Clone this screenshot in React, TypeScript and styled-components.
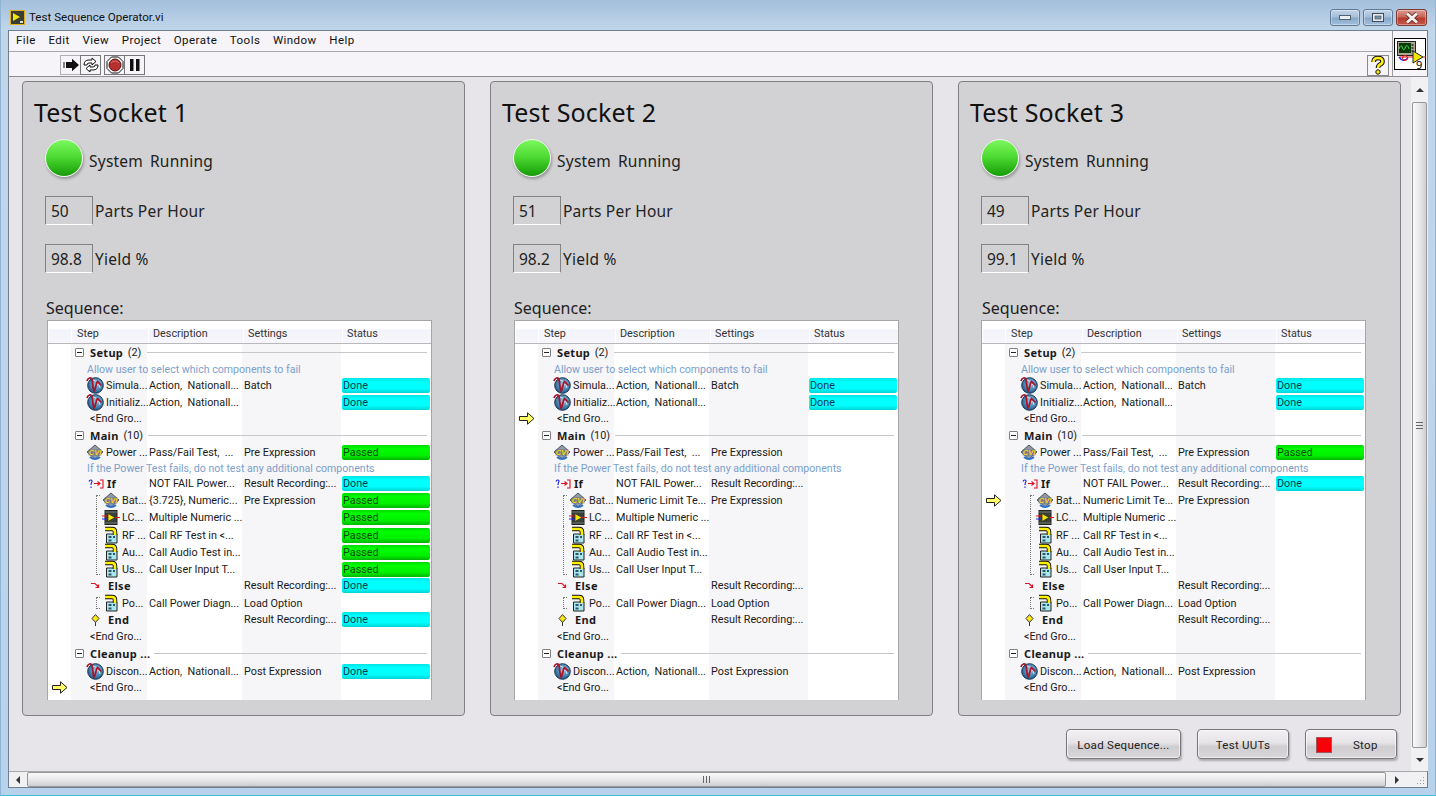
import React from "react";
import styled, { createGlobalStyle } from "styled-components";

const Global = createGlobalStyle`
  html, body { margin: 0; padding: 0; width: 1436px; height: 796px; overflow: hidden; }
  * { box-sizing: border-box; }
  body { font-family: "Noto Sans", "Open Sans", sans-serif; }
`;

const Win = styled.div`
  width: 1436px; height: 796px; display: flex; flex-direction: column;
  background: linear-gradient(180deg, #a3bfdc 0, #c2d6ea 30px, #b9d2ec 100%);
  border-bottom: 1px solid #3dbde0; border-left: 1px solid #8fb4d4; border-right: 1px solid #8fb4d4;
`;
const TitleBar = styled.div`
  height: 30px; flex: none; display: flex; align-items: center; padding: 0 8px 0 9px;
`;
const TitleLogo = styled.svg`margin-top: 4px; flex: none;`;
const TitleText = styled.span`
  font-family: Roboto, sans-serif; font-size: 11.6px; color: #111; margin-left: 4px; flex: 1; margin-top: 4px;
`;
const WinBtns = styled.div`display: flex; gap: 3px; margin-top: 5px; padding-bottom: 0;`;
const WinBtn = styled.div<{ $close?: boolean }>`
  width: ${p => (p.$close ? 31 : 30)}px; height: 17px; border: 1px solid ${p => (p.$close ? "#7d3a33" : "#5f7a96")};
  border-radius: 3px; display: flex; align-items: center; justify-content: center;
  background: ${p => (p.$close
    ? "linear-gradient(180deg,#dc9a90 0,#c9665a 45%,#b43b2e 55%,#c8584c 100%)"
    : "linear-gradient(180deg,#c3d5e8 0,#a4bfda 45%,#88a8c8 55%,#a2c0de 100%)")};
  box-shadow: inset 0 0 0 1px rgba(255,255,255,.35);
`;
const Client = styled.div`
  margin: 0 7px 0 7px; height: 758px; flex: none; display: flex; flex-direction: column;
  border: 1px solid #6f7f8f; background: #e7e5e9;
`;
const Bars = styled.div`display: flex; height: 46px; flex: none; border-bottom: 1px solid #8e8e90; background: #f6f4f8;`;
const BarsLeft = styled.div`flex: 1; display: flex; flex-direction: column;`;
const MenuBar = styled.div`
  height: 21px; display: flex; align-items: center; padding: 0 0 3px 7px; gap: 12.6px; flex: none;
  border-bottom: 1px solid #a8a8aa; font-family: Roboto, sans-serif; font-size: 11.5px; color: #111; letter-spacing: .04em;
`;
const ToolBar = styled.div`display: flex; align-items: center; padding: 2px 3px 0 51px; flex: 1;`;
const ToolGroup = styled.div`display: flex; margin-right: 4px;`;
const ToolBtn = styled.div<{ $strong?: boolean }>`
  width: 21px; height: 20px; display: flex; align-items: center; justify-content: center;
  border: 1px solid ${p => (p.$strong ? "#77777a" : "#b0b0b2")}; margin-right: -1px; background: #f6f4f8;
`;
const Spacer = styled.div`flex: 1;`;
const HelpBtn = styled.div`
  width: 22px; height: 21px; border: 1px solid #8a8a8a; display: flex; align-items: center; justify-content: center;
`;
const IconCell = styled.div`
  width: 35px; flex: none; border-left: 1px solid #9c9c9e; display: flex; align-items: center; justify-content: center; padding-top: 1px;
`;
const Middle = styled.div`flex: 1; display: flex; min-height: 0;`;
const Pane = styled.div`flex: 1; display: flex; flex-direction: column; padding: 4px 10px 0 13px;`;
const Panels = styled.div`display: flex; gap: 25px; flex: none;`;
const Panel = styled.section`
  width: 443px; height: 635px; flex: none; border: 1px solid #808082; border-radius: 4px;
  display: flex; flex-direction: column;
  background: repeating-conic-gradient(#d0cfd1 0 25%, #d4d3d5 0 50%) 0 0 / 2px 2px;
`;
const PanelTitle = styled.h2`
  margin: 13px 0 0 11px; font-size: 25px; font-weight: 400; line-height: 34px; color: #111; height: 34px; letter-spacing: .007em;
`;
const LedRow = styled.div`display: flex; align-items: center; margin: 10px 0 0 22px; height: 38px;`;
const Led = styled.div`
  width: 38px; height: 38px; border-radius: 50%; border: 1.5px solid #f4f4f4;
  background: linear-gradient(180deg, #7df85f 0, #4fdc33 45%, #169b08 100%);
  box-shadow: 1px 2px 3px rgba(0,0,0,.3);
`;
const LedLabel = styled.span`font-size: 15.5px; color: #222; word-spacing: .17em; letter-spacing: .015em; margin: 6px 0 0 6px;`;
const NumRow = styled.div`display: flex; align-items: center; margin: 19px 0 0 22px; height: 29px;`;
const NumBox = styled.div`
  width: 48px; height: 29px; padding-left: 5px; display: flex; align-items: center;
  border: 1px solid #828284; border-bottom-color: #fff; font-size: 15.5px; color: #222;
`;
const NumLabel = styled.span`font-size: 15.5px; color: #222; margin-left: 2px; letter-spacing: .014em;`;
const SeqLabel = styled.div<{ $inset: number }>`
  font-size: 16px; color: #222; margin: 24px 0 0 ${p => p.$inset}px; line-height: 22px; height: 23px;
`;
const TableBox = styled.div<{ $inset: number }>`
  width: 385px; height: 380px; margin-left: ${p => p.$inset}px; background: #fff; flex: none; display: flex; flex-direction: column;
  border: 1px solid #a6a6a8; border-bottom: none;
  font-family: Roboto, sans-serif; font-size: 10.8px; color: #1a1a1a; overflow: hidden;
`;
const cols = "23px 77px 95px 99px 89px";
const Header = styled.div`
  display: grid; grid-template-columns: ${cols}; height: 23px; flex: none; border-bottom: 1px solid #b9b9bb;
  background: linear-gradient(180deg,#fff 0,#fff 35%,#f3f3fb 40%,#f6f6fc 100%);
`;
const HeadCell = styled.div<{ $pad?: number }>`
  padding: 3px 0 0 ${p => p.$pad ?? 4}px; display: flex; align-items: center; border-left: 1px solid #fff; color: #333;
`;
const Body = styled.div`
  flex: 1; background: linear-gradient(90deg, #fff 0 23px, #f6f5f7 23px 99px, #fff 99px 194px, #f6f5f7 194px 293px, #fff 293px);
`;
const Row = styled.div<{ $h: number }>`
  display: grid; grid-template-columns: ${cols}; height: ${p => p.$h}px; align-items: center;
`;
const Gutter = styled.div`display: flex; align-items: center; justify-content: center; height: 100%;`;
const StepCell = styled.div<{ $indent: number; $tree?: string }>`
  position: relative; display: flex; align-items: center; gap: 2px; height: 100%; white-space: pre;
  padding-left: ${p => p.$indent}px;
  ${p => p.$tree ? `&::before { content: ""; position: absolute; left: 25px; width: 3px;
     top: ${p.$tree === "top" || p.$tree === "single" ? "3px" : "0"};
     bottom: ${p.$tree === "bottom" || p.$tree === "single" ? "3px" : "0"};
     border-left: 1px dotted #777;
     ${p.$tree === "top" || p.$tree === "single" ? "border-top: 1px dotted #777;" : ""}
     ${p.$tree === "bottom" || p.$tree === "single" ? "border-bottom: 1px dotted #777;" : ""} }` : ""}
`;
const BoldName = styled.b<{ $left?: number }>`
  font-family: "Noto Sans", sans-serif; font-weight: 700; margin-left: ${p => p.$left ?? 0}px; font-size: 11px; letter-spacing: .03em;
`;
const Cell = styled.div`padding-left: 1px; white-space: pre;`;
const Toggle = styled.span`
  width: 9px; height: 9px; border: 1px solid #808082; border-radius: 1px; margin: 0 3px 0 0; display: flex; align-items: center; justify-content: center; background: #fff; flex: none;
  &::after { content: ""; width: 5px; height: 1px; background: #222; }
`;
const LineFill = styled.span`flex: 1; height: 1px; background: #c8c8ca; margin-left: 4px;`;
const LineCell = styled.div<{ $left: number }>`
  grid-column: span 3; height: 1px; background: #c8c8ca; margin: 0 4px 0 ${p => p.$left}px;
`;
const Comment = styled.div`
  grid-column: 2 / -1; padding: 1px 0 0 16px; color: #7ba0cc; white-space: pre; font-size: 10.6px;
`;
const Pill = styled.div<{ $s: "Done" | "Passed" }>`
  height: 15px; margin-right: 1px; border-radius: 2px; padding-left: 1px; line-height: 15px;
  background: ${p => (p.$s === "Done"
    ? "linear-gradient(180deg,#00e4e4 0,#00ffff 25%,#00ffff 70%,#00d4d4 100%)"
    : "linear-gradient(180deg,#00d800 0,#00ff00 25%,#00f000 70%,#00b400 100%)")};
  color: ${p => (p.$s === "Done" ? "#0a3a4a" : "#0f4a0f")};
`;
const ButtonRow = styled.div`
  display: flex; justify-content: flex-end; gap: 16px; margin-top: 13px; padding-right: 4px;
`;
const PushBtn = styled.button<{ $w: number }>`
  width: ${p => p.$w}px; height: 30px; border: 1px solid #77777a; border-radius: 4px; padding: 1px 0 0;
  font-family: Roboto, sans-serif; font-size: 11.5px; color: #222; letter-spacing: .025em;
  display: flex; align-items: center; justify-content: center;
  background: linear-gradient(180deg,#f2f0f2 0,#e6e4e6 45%,#cfcdd0 60%,#d8d6d9 100%);
  box-shadow: 1px 2px 2px rgba(0,0,0,.25), inset 0 0 0 1px rgba(255,255,255,.6);
`;
const StopBtn = styled(PushBtn)`justify-content: flex-start; padding-left: 10px;`;
const RedSq = styled.span`width: 16px; height: 16px; background: #f8000a; border: 1px solid #a0565a; flex: none; margin-right: 21px;`;
const VScroll = styled.div`
  width: 17px; flex: none; display: flex; flex-direction: column; align-items: center; background: #f1f0f3;
`;
const ArrowSlot = styled.div<{ $h: number }>`height: ${p => p.$h}px; flex: none; display: flex; align-items: center; justify-content: center;`;
const ArrowSlotH = styled.div<{ $w: number }>`width: ${p => p.$w}px; flex: none; display: flex; align-items: center; justify-content: center;`;
const Tri = styled.span<{ $d: "u" | "d" | "l" | "r" }>`
  width: 0; height: 0; border-style: solid;
  ${p => p.$d === "u" ? "border-width: 0 4px 4px 4px; border-color: transparent transparent #333 transparent;"
    : p.$d === "d" ? "border-width: 4px 4px 0 4px; border-color: #333 transparent transparent transparent;"
    : p.$d === "r" ? "border-width: 4px 0 4px 4px; border-color: transparent transparent transparent #333;"
    : "border-width: 4px 4px 4px 0; border-color: transparent #333 transparent transparent;"}
`;
const VThumb = styled.div`
  flex: 1; width: 15px; border: 1px solid #97979a; border-radius: 2px; display: flex; align-items: center; justify-content: center;
  background: linear-gradient(90deg,#fafafa 0,#e8e8ea 50%,#cfcfd2 100%);
`;
const VGrip = styled.span`width: 7px; height: 7px; border-top: 1px solid #666; border-bottom: 1px solid #666; position: relative;
  &::after { content: ""; position: absolute; left: 0; right: 0; top: 2px; height: 1px; background: #666; }`;
const HGrip = styled.span`width: 7px; height: 7px; border-left: 1px solid #666; border-right: 1px solid #666; position: relative;
  &::after { content: ""; position: absolute; top: 0; bottom: 0; left: 2px; width: 1px; background: #666; }`;
const HBar = styled.div`height: 16px; flex: none; display: flex; background: #f1f0f3; border-top: 1px solid #a8a8aa;`;
const HThumb = styled.div`
  flex: 1; border: 1px solid #97979a; border-radius: 2px; display: flex; align-items: center; justify-content: center;
  background: linear-gradient(180deg,#fafafa 0,#e8e8ea 50%,#cfcfd2 100%);
`;
const Corner = styled.div`width: 17px; flex: none; margin-left: 3px; display: flex; align-items: flex-end; justify-content: flex-end; padding: 0 2px 2px 0;`;
const Ico = styled.svg`flex: none;`;

const ArrowMark = () => (
  <svg width="16" height="13" viewBox="0 0 16 13">
    <path d="M.5 4.5H8.5V.8L15 6.5 8.5 12.2V8.5H.5Z" fill="#ffff66" stroke="#222" strokeWidth="1" />
  </svg>
);
const Globe = () => (
  <Ico width="18" height="18" viewBox="0 0 18 18">
    <defs><radialGradient id="gl" cx=".55" cy=".4" r=".7"><stop offset="0" stopColor="#9fc6e0" /><stop offset=".6" stopColor="#3f7fae" /><stop offset="1" stopColor="#0f3f6e" /></radialGradient></defs>
    <circle cx="9.5" cy="9.5" r="7.8" fill="url(#gl)" stroke="#16334f" />
    <path d="M7 4 12 6 9 10 13 8 14 12" fill="none" stroke="#dbe8f2" strokeWidth="1" />
    <path d="M1 5C2 1.500 5 1 6 3.500 6.800 7 6.500 12 8 15 9.500 14 10 7 11.500 5.500 13 6 13.300 9 15.500 9" fill="none" stroke="#a8142a" strokeWidth="1.800" />
  </Ico>
);
const Cvi = () => (
  <Ico width="18" height="17" viewBox="0 0 18 17">
    <path d="M9 1 17 8 9 15 1 8Z" fill="#8f9aa6" stroke="#4d5660" />
    <path d="M4 13Q9 17 14 13" fill="none" stroke="#2b6fc8" strokeWidth="2" />
    <rect x="2.500" y="5.500" width="13" height="6" fill="#5d6670" opacity=".55" />
    <text x="9" y="11" textAnchor="middle" fontSize="7.500" fontWeight="700" fontStyle="italic" fontFamily="Liberation Sans" fill="#ffd21f">CVI</text>
  </Ico>
);
const Lv = () => (
  <Ico width="18" height="17" viewBox="0 0 18 17">
    <rect x="3" y="1.500" width="12" height="14" fill="#39423a" stroke="#222" />
    <path d="M3.500 3h11M3.500 14h11" stroke="#aab0a8" strokeDasharray="1 1" />
    <path d="M0 7H6" stroke="#e11" />
    <path d="M0 10H6" stroke="#22f" />
    <path d="M12 8.500H18" stroke="#e11" />
    <path d="M6 4.500V12.500L13 8.500Z" fill="#f2e600" stroke="#222" strokeWidth=".7" />
  </Ico>
);
const Doc = () => (
  <Ico width="17" height="18" viewBox="-1 0 17 18">
    <path d="M2.500 8H13V17H2.500Z" fill="#a9e6ee" stroke="#222" />
    <rect x="4.500" y="10" width="3" height="2" fill="#356" /><rect x="9" y="10" width="2" height="2" fill="#356" /><rect x="4.500" y="13.500" width="3" height="2" fill="#356" />
    <path d="M1 3H8Q11 3 11 6V9" fill="none" stroke="#111" strokeWidth="4.500" />
    <path d="M1 3H8Q11 3 11 6V9" fill="none" stroke="#fff000" strokeWidth="2.700" />
  </Ico>
);
const IfIcon = () => (
  <Ico width="17" height="10" viewBox="0 0 17 10">
    <path d="M1 2.500Q1.500 .8 3 1 4.800 1.500 3.500 3.500 3 4.500 3 6M3 7.500V9" fill="none" stroke="#2020e0" strokeWidth="1.100" />
    <path d="M6 4.500H12M9.500 2.500 12 4.500 9.500 6.500" fill="none" stroke="#e01020" strokeWidth="1.100" />
    <path d="M12 1H15V9H12" fill="none" stroke="#e01020" strokeWidth="1.100" />
  </Ico>
);
const ElseIcon = () => (
  <Ico width="9" height="7" viewBox="0 0 9 7">
    <path d="M0 1.500H4L7.500 5M7.500 2.500V5.500H4.500" fill="none" stroke="#e01020" strokeWidth="1.100" />
  </Ico>
);
const EndIcon = () => (
  <Ico width="9" height="12" viewBox="0 0 9 12">
    <path d="M4.500 8V12" stroke="#333" />
    <path d="M4.500 .6 8 4.500 4.500 8.400 1 4.500Z" fill="#ffe818" stroke="#333" />
  </Ico>
);

type Status = "Done" | "Passed";
type RowDef =
  | { k: "group"; name: string; count?: string; left: number; wide?: boolean }
  | { k: "comment"; text: string }
  | { k: "end" }
  | { k: "step"; icon: "globe" | "cvi" | "lv" | "doc"; name: string; desc?: string; set?: string; tree?: string }
  | { k: "flow"; icon: "if" | "else" | "end"; name: string; desc?: string; set?: string };

const rows: RowDef[] = [
  { k: "group", name: "Setup", count: " (2)", left: 0 },
  { k: "comment", text: "Allow user to select which components to fail" },
  { k: "step", icon: "globe", name: "Simula...", desc: "Action,  Nationall...", set: "Batch" },
  { k: "step", icon: "globe", name: "Initializ...", desc: "Action,  Nationall..." },
  { k: "end" },
  { k: "group", name: "Main", count: " (10)", left: 0 },
  { k: "step", icon: "cvi", name: "Power ...", desc: "Pass/Fail Test,  ...", set: "Pre Expression" },
  { k: "comment", text: "If the Power Test fails, do not test any additional components" },
  { k: "flow", icon: "if", name: "If", desc: "NOT FAIL Power...", set: "Result Recording:..." },
  { k: "step", icon: "cvi", name: "Bat...", desc: "Numeric Limit Te...", set: "Pre Expression", tree: "top" },
  { k: "step", icon: "lv", name: "LC...", desc: "Multiple Numeric ...", tree: "mid" },
  { k: "step", icon: "doc", name: "RF ...", desc: "Call RF Test in <...", tree: "mid" },
  { k: "step", icon: "doc", name: "Au...", desc: "Call Audio Test in...", tree: "mid" },
  { k: "step", icon: "doc", name: "Us...", desc: "Call User Input T...", tree: "bottom" },
  { k: "flow", icon: "else", name: "Else", set: "Result Recording:..." },
  { k: "step", icon: "doc", name: "Po...", desc: "Call Power Diagn...", set: "Load Option", tree: "single" },
  { k: "flow", icon: "end", name: "End", set: "Result Recording:..." },
  { k: "end" },
  { k: "group", name: "Cleanup ...", left: 6, wide: true },
  { k: "step", icon: "globe", name: "Discon...", desc: "Action,  Nationall...", set: "Post Expression" },
  { k: "end" },
];

const heights = rows.map((r, i) => (i === 1 ? 15 : i === 7 ? 14 : 17));

const done1: Record<number, Status> = { 2: "Done", 3: "Done", 6: "Passed", 8: "Done", 9: "Passed", 10: "Passed", 11: "Passed", 12: "Passed", 13: "Passed", 14: "Done", 16: "Done", 19: "Done" };
const done2: Record<number, Status> = { 2: "Done", 3: "Done" };
const done3: Record<number, Status> = { 2: "Done", 3: "Done", 6: "Passed", 8: "Done" };

const sockets: { n: number; pph: string; y: string; status: Record<number, Status>; arrow: number; inset: number; labelInset: number; firstDesc?: string }[] = [
  { n: 1, pph: "50", y: "98.8", status: done1, arrow: 20, inset: 24, labelInset: 23, firstDesc: "{3.725}, Numeric..." },
  { n: 2, pph: "51", y: "98.2", status: done2, arrow: 4, inset: 23, labelInset: 23 },
  { n: 3, pph: "49", y: "99.1", status: done3, arrow: 9, inset: 22, labelInset: 23 },
];

const stepIcon = (i: string) =>
  i === "globe" ? <Globe /> : i === "cvi" ? <Cvi /> : i === "lv" ? <Lv /> : <Doc />;

const SeqTable = ({ s }: { s: (typeof sockets)[number] }) => (
  <TableBox $inset={s.inset}>
    <Header>
      <HeadCell />
      <HeadCell $pad={5}>Step</HeadCell>
      <HeadCell>Description</HeadCell>
      <HeadCell>Settings</HeadCell>
      <HeadCell>Status</HeadCell>
    </Header>
    <Body>
      {rows.map((r, i) => {
        const arrow = <Gutter>{s.arrow === i ? <ArrowMark /> : null}</Gutter>;
        const st = s.status[i];
        const statusCell = <div>{st ? <Pill $s={st}>{st}</Pill> : null}</div>;
        if (r.k === "group")
          return (
            <Row key={i} $h={heights[i]}>
              {arrow}
              <StepCell $indent={4}>
                <Toggle />
                <BoldName $left={1}>{r.name}</BoldName>
                {r.count ? <span>{r.count}</span> : null}
                {r.wide ? null : <LineFill />}
              </StepCell>
              <LineCell $left={r.left} />
            </Row>
          );
        if (r.k === "comment")
          return (
            <Row key={i} $h={heights[i]}>
              {arrow}
              <Comment>{r.text}</Comment>
            </Row>
          );
        if (r.k === "end")
          return (
            <Row key={i} $h={heights[i]}>
              {arrow}
              <StepCell $indent={19}>{"<End Gro..."}</StepCell>
              <Cell /><Cell />{statusCell}
            </Row>
          );
        if (r.k === "flow") {
          const icon = r.icon === "if" ? <IfIcon /> : r.icon === "else" ? <ElseIcon /> : <EndIcon />;
          const pad = r.icon === "if" ? 17 : 20;
          const gap = r.icon === "if" ? 0 : 6;
          return (
            <Row key={i} $h={heights[i]}>
              {arrow}
              <StepCell $indent={pad}>{icon}<BoldName $left={gap}>{r.name}</BoldName></StepCell>
              <Cell>{r.desc}</Cell>
              <Cell>{r.set}</Cell>
              {statusCell}
            </Row>
          );
        }
        const treeIndent = r.tree ? (r.icon === "doc" ? 32 : 31) : 15;
        const desc = i === 9 && s.firstDesc ? s.firstDesc : r.desc;
        return (
          <Row key={i} $h={heights[i]}>
            {arrow}
            <StepCell $indent={treeIndent} $tree={r.tree}>{stepIcon(r.icon)}{r.name}</StepCell>
            <Cell>{desc}</Cell>
            <Cell>{r.set}</Cell>
            {statusCell}
          </Row>
        );
      })}
    </Body>
  </TableBox>
);

export default function App() {
  return (
    <Win>
      <Global />
      <TitleBar>
        <TitleLogo width="15" height="15" viewBox="0 0 15 15">
          <rect x=".5" y=".5" width="14" height="14" fill="#3a3d32" stroke="#e0b020" />
          <path d="M3 3V11L10 7Z" fill="#f2e600" />
          <path d="M10 11h3v2h-3z" fill="#ddd" />
        </TitleLogo>
        <TitleText>Test Sequence Operator.vi</TitleText>
        <WinBtns>
          <WinBtn><svg width="12" height="5"><rect x=".5" y=".5" width="11" height="4" fill="#e8eef4" stroke="#54606c" /></svg></WinBtn>
          <WinBtn><svg width="12" height="9"><rect x=".5" y=".5" width="11" height="8" fill="#e4eaf0" stroke="#3f4a56" /><rect x="3" y="3" width="6" height="3" fill="#7d93aa" stroke="#3f4a56" strokeWidth=".6" /></svg></WinBtn>
          <WinBtn $close><svg width="16" height="12" viewBox="0 0 16 12"><path d="M3 1.500 13 10.500M13 1.500 3 10.500" stroke="#5a2a26" strokeWidth="4.400" /><path d="M3 1.500 13 10.500M13 1.500 3 10.500" stroke="#f4efec" strokeWidth="3" /></svg></WinBtn>
        </WinBtns>
      </TitleBar>
      <Client>
        <Bars>
          <BarsLeft>
            <MenuBar>
              {["File", "Edit", "View", "Project", "Operate", "Tools", "Window", "Help"].map(m => <span key={m}>{m}</span>)}
            </MenuBar>
            <ToolBar>
              <ToolGroup>
                <ToolBtn>
                  <svg width="18" height="14" viewBox="0 0 18 14"><path d="M1 5H3M1 7H3M1 9H3" stroke="#111" /><path d="M4 4H10V.8L17 7 10 13.200V10H4Z" fill="#111" /></svg>
                </ToolBtn>
                <ToolBtn $strong>
                  <svg width="18" height="16" viewBox="0 0 18 16" fill="#fff" stroke="#111"><path d="M2 8Q2 3 7 3H10V1L14 4.500 10 8V6H7Q5 6 5 8Z" /><path d="M16 8Q16 13 11 13H8V15L4 11.500 8 8V10H11Q13 10 13 8Z" /></svg>
                </ToolBtn>
              </ToolGroup>
              <ToolGroup>
                <ToolBtn $strong>
                  <svg width="18" height="18" viewBox="0 0 18 18"><path d="M5.500 1H12.500L17 5.500V12.500L12.500 17H5.500L1 12.500V5.500Z" fill="#fff" stroke="#111" /><circle cx="9" cy="9" r="6" fill="#b5302e" stroke="#5a1010" /><path d="M5 7Q9 3 13 7" stroke="#d87070" fill="none" /></svg>
                </ToolBtn>
                <ToolBtn $strong>
                  <svg width="12" height="12"><rect x="1" y="0" width="3.500" height="12" fill="#111" /><rect x="7" y="0" width="3.500" height="12" fill="#111" /></svg>
                </ToolBtn>
              </ToolGroup>
              <Spacer />
              <HelpBtn>
                <svg width="14" height="19" viewBox="0 0 14 19">
                  <path d="M2.500 6Q2.500 2 7 2 11.500 2 11.500 5.500 11.500 7.500 9 8.500 7 9.500 7 12" fill="none" stroke="#111" strokeWidth="4.600" />
                  <path d="M2.500 6Q2.500 2 7 2 11.500 2 11.500 5.500 11.500 7.500 9 8.500 7 9.500 7 12" fill="none" stroke="#ffee10" strokeWidth="2.600" />
                  <circle cx="7" cy="16" r="2.200" fill="#ffee10" stroke="#111" />
                </svg>
              </HelpBtn>
            </ToolBar>
          </BarsLeft>
          <IconCell>
            <svg width="32" height="32" viewBox="0 0 32 32">
              <rect x=".5" y=".5" width="31" height="31" fill="#fff" stroke="#000" />
              <rect x="3.500" y="3.500" width="18" height="14" fill="#a8a890" stroke="#222" />
              <rect x="5" y="5" width="12" height="10" fill="#0a3a0a" />
              <path d="M5 11Q7 5 8.500 10 10 14 11.500 9 13 5 15 11" fill="none" stroke="#3fe03f" />
              <path d="M18.500 6v8" stroke="#444" strokeDasharray="2 1" strokeWidth="2" />
              <path d="M6 19H24" stroke="#e11" />
              <path d="M5 19Q9 25 14 20" fill="none" stroke="#22e" strokeWidth="1.400" />
              <circle cx="11" cy="20" r="2.500" fill="none" stroke="#e11" />
              <path d="M19 13V25L29 19Z" fill="#f2e600" stroke="#222" />
              <path d="M29 19H32" stroke="#e11" />
              <text x="22" y="30.500" fontSize="11" fontFamily="Noto Sans" fill="#000">9</text>
            </svg>
          </IconCell>
        </Bars>
        <Middle>
          <Pane>
            <Panels>
              {sockets.map(s => (
                <Panel key={s.n}>
                  <PanelTitle>Test Socket {s.n}</PanelTitle>
                  <LedRow><Led /><LedLabel>System Running</LedLabel></LedRow>
                  <NumRow><NumBox>{s.pph}</NumBox><NumLabel>Parts Per Hour</NumLabel></NumRow>
                  <NumRow><NumBox>{s.y}</NumBox><NumLabel>Yield %</NumLabel></NumRow>
                  <SeqLabel $inset={s.labelInset}>Sequence:</SeqLabel>
                  <SeqTable s={s} />
                </Panel>
              ))}
            </Panels>
            <ButtonRow>
              <PushBtn $w={115}>Load Sequence...</PushBtn>
              <PushBtn $w={92}>Test UUTs</PushBtn>
              <StopBtn $w={92}><RedSq />Stop</StopBtn>
            </ButtonRow>
          </Pane>
          <VScroll>
            <ArrowSlot $h={25}><Tri $d="u" /></ArrowSlot>
            <VThumb><VGrip /></VThumb>
            <ArrowSlot $h={23}><Tri $d="d" /></ArrowSlot>
          </VScroll>
        </Middle>
        <HBar>
          <ArrowSlotH $w={18}><Tri $d="l" /></ArrowSlotH>
          <HThumb><HGrip /></HThumb>
          <ArrowSlotH $w={21}><Tri $d="r" /></ArrowSlotH>
          <Corner>
            <svg width="9" height="9"><g fill="#999"><rect x="7" y="1" width="1" height="1" /><rect x="4" y="4" width="1" height="1" /><rect x="7" y="4" width="1" height="1" /><rect x="1" y="7" width="1" height="1" /><rect x="4" y="7" width="1" height="1" /><rect x="7" y="7" width="1" height="1" /></g></svg>
          </Corner>
        </HBar>
      </Client>
    </Win>
  );
}
